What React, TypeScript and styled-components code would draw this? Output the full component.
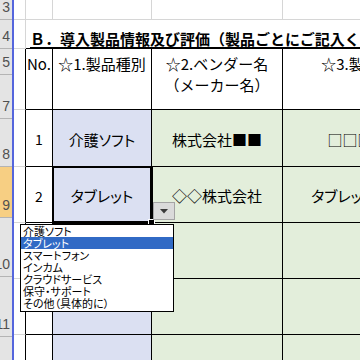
import React from 'react';
import styled, { createGlobalStyle } from 'styled-components';

const JP = `"Noto Sans CJK JP", "Noto Sans", sans-serif`;
const GRID = '#d6d6d6';
const INK = '#000';

type RowHeadInfo = { label: string; height: number; active?: boolean };

const rowHeads: RowHeadInfo[] = [
  { label: '3', height: 20 },
  { label: '4', height: 29 },
  { label: '5', height: 26 },
  { label: '7', height: 44 },
  { label: '8', height: 48 },
  { label: '9', height: 51, active: true },
  { label: '10', height: 59 },
  { label: '11', height: 60 },
  { label: '12', height: 60 },
];

type Fill = 'white' | 'blue' | 'green';

interface ProductRow {
  id: number;
  no: string;
  kind: string;
  vendor: string;
  product: string;
}

// rows 3 and 4 have no number filled in yet
const products: ProductRow[] = [
  { id: 1, no: '1', kind: '介護ソフト', vendor: '株式会社■■', product: '□□□□' },
  { id: 2, no: '2', kind: 'タブレット', vendor: '◇◇株式会社', product: 'タブレット端末' },
  { id: 3, no: '', kind: '', vendor: '', product: '' },
  { id: 4, no: '', kind: '', vendor: '', product: '' },
  { id: 5, no: '5', kind: '', vendor: '', product: '' },
];

const options = [
  '介護ソフト',
  'タブレット',
  'スマートフォン',
  'インカム',
  'クラウドサービス',
  '保守・サポート',
  'その他（具体的に）',
];

const App: React.FC = () => {
  return (
    <>
      <GlobalStyle />
      <Screen>
        <RowHeaderColumn>
          {rowHeads.map(r => (
            <RowHead key={r.label} $h={r.height} $active={r.active}>
              {r.label}
            </RowHead>
          ))}
        </RowHeaderColumn>
        <FrameLine />
        <SheetArea>
          <SheetGrid>
            {[0, 1, 2, 3, 4].map(i => (
              <GapCell key={`top-${i}`} />
            ))}

            <GapCell />
            <TitleCell>
              <span>Ｂ．導入製品情報及び評価（製品ごとにご記入ください）</span>
            </TitleCell>

            <GapCell $edge />
            <HeadCell>No.</HeadCell>
            <HeadCell>☆1.製品種別</HeadCell>
            <HeadCell>{'☆2.ベンダー名\n（メーカー名）'}</HeadCell>
            <HeadCell>☆3.製品名</HeadCell>

            {products.map(p => (
              <React.Fragment key={p.id}>
                <GapCell $edge />
                <DataCell $fill="white" $num>
                  {p.no}
                </DataCell>
                <DataCell $fill="blue" $selected={p.id === 2}>
                  {p.kind}
                </DataCell>
                <DataCell $fill="green">{p.vendor}</DataCell>
                <DataCell $fill="green">{p.product}</DataCell>
              </React.Fragment>
            ))}
          </SheetGrid>

          <DropButton>
            <svg width="8" height="5" viewBox="0 0 8 5">
              <polygon points="0,0 8,0 4,4.5" fill="#3a3a3a" />
            </svg>
          </DropButton>

          <ListBox>
            {options.map(o => (
              <ListItem key={o} $active={o === 'タブレット'}>
                {o}
              </ListItem>
            ))}
          </ListBox>
        </SheetArea>
      </Screen>
    </>
  );
};

const GlobalStyle = createGlobalStyle`
  html, body {
    margin: 0;
    padding: 0;
    background: #fff;
    overflow: hidden;
  }
  #root {
    width: 360px;
    height: 360px;
  }
`;

const Screen = styled.div`
  display: flex;
  width: 360px;
  height: 360px;
  overflow: hidden;
  background: #fff;
`;

const RowHeaderColumn = styled.div`
  width: 12px;
  flex-shrink: 0;
  display: flex;
  flex-direction: column;
  background: #e4e4e4;
`;

const RowHead = styled.div<{ $h: number; $active?: boolean }>`
  height: ${({ $h }) => $h}px;
  flex-shrink: 0;
  box-sizing: border-box;
  border-bottom: 1px solid #b4b4b4;
  background: ${({ $active }) => ($active ? '#f7cf83' : '#e4e4e4')};
  display: flex;
  align-items: flex-end;
  justify-content: flex-end;
  padding: 0 2px 5px 0;
  overflow: hidden;
  white-space: nowrap;
  font: 14px 'Liberation Sans', sans-serif;
  line-height: 14px;
  color: #505050;
`;

const FrameLine = styled.div`
  width: 2px;
  flex-shrink: 0;
  background: #5566dd;
`;

const SheetArea = styled.div`
  position: relative;
  flex: 1;
  overflow: hidden;
`;

const SheetGrid = styled.div`
  display: grid;
  grid-template-columns: 12px 27px 99px 131px 150px;
  grid-template-rows: 20px 29px 61px 57px 56px 56px 56px 56px;
  font-family: ${JP};
  color: #000;
`;

const GapCell = styled.div<{ $edge?: boolean }>`
  box-sizing: border-box;
  border-right: 1px solid ${({ $edge }) => ($edge ? INK : GRID)};
  border-bottom: 1px solid ${GRID};
`;

const TitleCell = styled.div`
  grid-column: 2 / -1;
  box-sizing: border-box;
  border-bottom: 1px solid ${INK};
  display: flex;
  align-items: flex-end;
  padding-left: 4px;
  white-space: nowrap;
  font-size: 15px;
  font-weight: bold;
  line-height: 18px;

  span {
    text-decoration: underline;
    text-decoration-thickness: 2px;
    text-underline-offset: 2px;
  }
`;

const HeadCell = styled.div`
  box-sizing: border-box;
  border-right: 1px solid ${INK};
  border-bottom: 1px solid ${INK};
  background: #fff;
  padding-top: 4px;
  text-align: center;
  white-space: pre-line;
  font-size: 15px;
  line-height: 21px;
  overflow: hidden;
`;

const fills: Record<Fill, string> = {
  white: '#ffffff',
  blue: '#dbe0f2',
  green: '#e3eedb',
};

const DataCell = styled.div<{ $fill: Fill; $selected?: boolean; $num?: boolean }>`
  position: relative;
  box-sizing: border-box;
  border-right: 1px solid ${INK};
  border-bottom: 1px solid ${INK};
  background: ${({ $fill }) => fills[$fill]};
  display: flex;
  align-items: center;
  justify-content: center;
  white-space: nowrap;
  font-size: ${({ $num }) => ($num ? '14px' : '15px')};
  font-feature-settings: 'palt';
  padding-top: 2px;
  z-index: ${({ $selected }) => ($selected ? 1 : 0)};
  box-shadow: ${({ $selected }) =>
    $selected ? `0 0 0 1px ${INK}, inset 0 0 0 1px ${INK}` : 'none'};

  &::after {
    content: '';
    display: ${({ $selected }) => ($selected ? 'block' : 'none')};
    position: absolute;
    right: -4px;
    bottom: -4px;
    width: 5px;
    height: 5px;
    background: ${INK};
    border: 1px solid #fff;
  }
`;

const DropButton = styled.div`
  position: absolute;
  left: 139px;
  top: 202px;
  width: 22px;
  height: 18px;
  box-sizing: border-box;
  background: #dadada;
  border: 1px solid #a4a4a4;
  display: flex;
  align-items: center;
  justify-content: center;
  z-index: 2;
`;

const ListBox = styled.ul`
  position: absolute;
  left: 6px;
  top: 224px;
  width: 154px;
  margin: 0;
  padding: 0 0 2px;
  list-style: none;
  box-sizing: border-box;
  border: 1px solid ${INK};
  background: #fff;
  z-index: 3;
`;

const ListItem = styled.li<{ $active?: boolean }>`
  height: 12px;
  line-height: 12px;
  padding-left: 2px;
  font-family: ${JP};
  font-size: 11px;
  font-feature-settings: 'palt';
  white-space: nowrap;
  background: ${({ $active }) => ($active ? '#316ac5' : 'transparent')};
  color: ${({ $active }) => ($active ? '#fff' : '#000')};
`;

export default App;
